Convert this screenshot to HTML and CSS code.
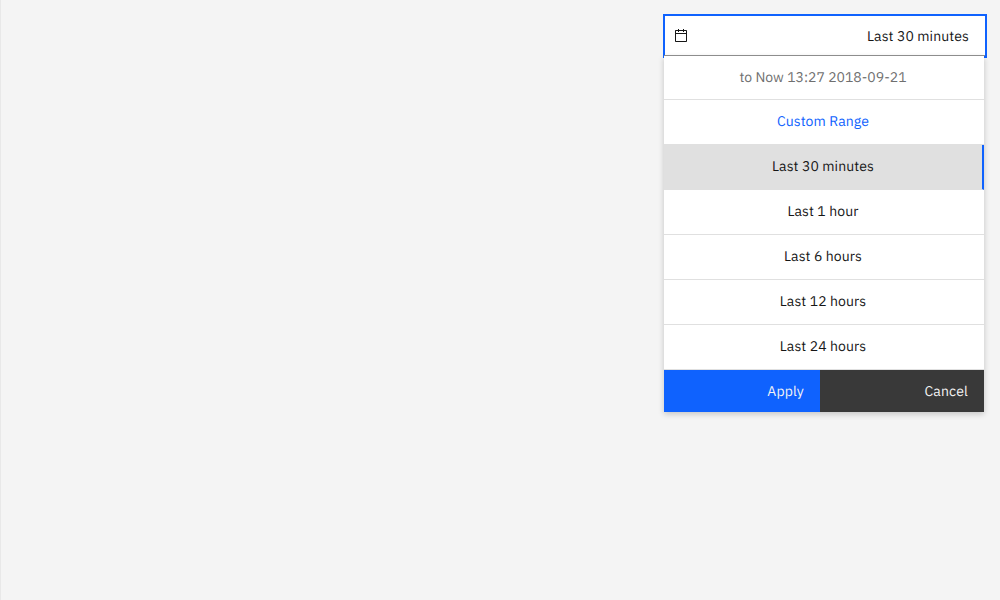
FILE: index.html
```html
<!DOCTYPE html>
<html lang="en">
<head>
<meta charset="utf-8">
<title>Date time picker</title>
<link rel="stylesheet" href="styles.css">
</head>
<body>
<div class="picker">
  <div class="field">
    <svg class="field-icon" width="16" height="16" viewBox="0 0 32 32" aria-hidden="true"><path d="M26,4h-4V2h-2v2h-8V2h-2v2H6C4.9,4,4,4.9,4,6v20c0,1.1,0.9,2,2,2h20c1.1,0,2-0.9,2-2V6C28,4.9,27.1,4,26,4z M26,26H6V12h20V26z M26,10H6V6h4v2h2V6h8v2h2V6h4V10z"/></svg>
    <span>Last 30 minutes</span>
  </div>
  <div class="menu">
    <ul class="list">
      <li class="item item-info">to Now 13:27 2018-09-21</li>
      <li class="item item-custom">Custom Range</li>
      <li class="item item-selected">Last 30 minutes</li>
      <li class="item">Last 1 hour</li>
      <li class="item">Last 6 hours</li>
      <li class="item">Last 12 hours</li>
      <li class="item">Last 24 hours</li>
    </ul>
    <div class="actions">
      <button class="button button-apply" type="button">Apply</button>
      <button class="button button-cancel" type="button">Cancel</button>
    </div>
  </div>
</div>
</body>
</html>
```
FILE: styles.css
```css
* {
  box-sizing: border-box;
}

body {
  margin: 0;
  height: 600px;
  overflow: hidden;
  background: #f4f4f4;
  border-left: 1px solid #e8e8e8;
  color: #161616;
  font: 14px/18px "IBM Plex Sans", Roboto, sans-serif;
  letter-spacing: 0.1px;
  text-rendering: geometricPrecision;
  display: flex;
  justify-content: flex-end;
  align-items: flex-start;
}

.picker {
  width: 324px;
  margin: 14px 13px 0 0;
}

.field {
  height: 44px;
  padding: 0 16px 0 8px;
  border: 2px solid #0f62fe;
  background: #fff;
  display: flex;
  align-items: center;
  justify-content: space-between;
}

.field-icon {
  fill: #161616;
}

.menu {
  position: relative;
  width: 320px;
  margin: -2px 0 0 1px;
  background: #fff;
  box-shadow: 0 2px 6px rgba(0, 0, 0, 0.2);
}

/* underline of the field, shown above the open menu */
.menu::before {
  content: "";
  position: absolute;
  top: -1px;
  left: 0;
  width: 321px;
  height: 1px;
  background: #8d8d8d;
}

.list {
  list-style: none;
  margin: 0;
  padding: 0;
}

.item {
  height: 45px;
  padding: 0 2px 2px 0;
  border-bottom: 1px solid #e0e0e0;
  display: flex;
  align-items: center;
  justify-content: center;
}

.item-info {
  height: 44px;
  padding-bottom: 1px;
  color: #6f6f6f;
  letter-spacing: 0;
}

.item-custom {
  color: #0f62fe;
}

.item-selected {
  background: #e0e0e0;
  padding-right: 0;
  border-right: 2px solid #0f62fe;
}

.actions {
  display: flex;
}

.button {
  height: 42px;
  margin: 0;
  padding: 0 16px 0 0;
  border: 0;
  color: #f4f4f4;
  font: inherit;
  letter-spacing: 0.16px;
  text-rendering: inherit;
  text-align: right;
}

.button-apply {
  width: 156px;
  background: #0f62fe;
}

.button-cancel {
  width: 164px;
  background: #393939;
}
```
